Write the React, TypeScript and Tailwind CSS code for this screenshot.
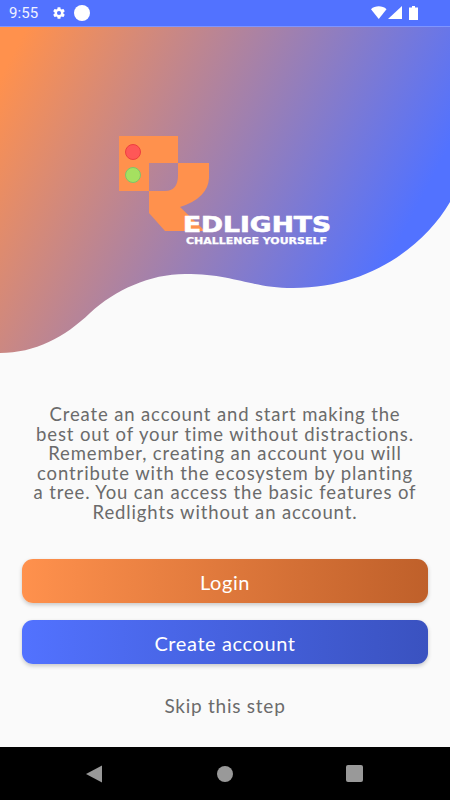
import React from "react";

function StatusBar() {
  return (
    <div className="h-[27px] shrink-0 bg-[#5272ff] border-b border-[#7f95ff] flex items-center pl-[9px] pr-[31px] text-white">
      <span className="text-[15px] leading-none font-['Roboto',sans-serif] tracking-[0.1px] text-[#f0f3ff]">9:55</span>
      <svg className="ml-[14px]" width="14" height="14" viewBox="0 0 24 24" fill="#fff">
        <path d="M19.4 13c.04-.33.06-.66.06-1s-.02-.67-.06-1l2.1-1.65c.2-.15.25-.42.13-.64l-2-3.46c-.12-.22-.38-.3-.6-.22l-2.5 1c-.52-.4-1.08-.73-1.7-.98l-.37-2.65A.5.5 0 0 0 14 2h-4a.5.5 0 0 0-.49.42l-.38 2.65c-.6.25-1.17.59-1.69.98l-2.49-1c-.23-.09-.49 0-.61.22l-2 3.46c-.13.22-.07.49.12.64L4.57 11c-.04.33-.07.67-.07 1s.03.67.07 1l-2.11 1.65c-.19.15-.25.42-.12.64l2 3.46c.12.22.38.3.61.22l2.49-1c.52.4 1.08.73 1.69.98l.38 2.65c.03.24.24.42.49.42h4c.25 0 .46-.18.49-.42l.37-2.65c.62-.25 1.18-.58 1.7-.98l2.5 1c.22.08.48 0 .6-.22l2-3.46c.12-.22.07-.49-.13-.64L19.4 13zM12 15.5A3.5 3.5 0 1 1 12 8.5a3.5 3.5 0 0 1 0 7z" />
      </svg>
      <span className="ml-[8px] w-4 h-4 rounded-full bg-white" />
      <svg className="ml-auto" width="48" height="16" viewBox="0 0 48 16" fill="#fff">
        <path d="M0 4.2 C4 0.4 11.5 0.4 15.500 4.200 L7.750 14 Z" />
        <path d="M17 14 L31 1 V14 Z" />
        <path d="M38 2.500 H41 V1 H44 V2.500 H47 V15 H38 Z" />
      </svg>
    </div>
  );
}

function Hero() {
  return (
    <svg className="block shrink-0" width="450" height="326" viewBox="0 27 450 326">
      <defs>
        <linearGradient id="wave" gradientUnits="userSpaceOnUse" x1="20" y1="40" x2="400" y2="240">
          <stop offset="0" stopColor="#ff914d" />
          <stop offset="1" stopColor="#5272ff" />
        </linearGradient>
      </defs>
      <path
        fill="url(#wave)"
        d="M0 27 H450 V202 C425 245 370 288 293 288 C250 288 235 274 185 274 C150 274 115 290 90 313 C65 337 35 353 0 353 Z"
      />
      <path fill="#ff914d" d="M119 136 H178 V163 H149 V191 H119 Z" />
      <path
        fill="#ff914d"
        d="M178 163 H209 V178 Q208 198 180 207 L205 231 H165 L149 213 V191 H165 Q178 191 178 175 Z"
      />
      <circle cx="133" cy="152" r="7.500" fill="#ff5757" stroke="#ee3f3f" strokeWidth="1" />
      <circle cx="133" cy="175" r="7.500" fill="#a5e060" stroke="#7ec46a" strokeWidth="1" />
      <text
        x="183"
        y="232"
        fontFamily="'DejaVu Sans', sans-serif"
        fontWeight="700"
        fontSize="20.500"
        fill="#fff"
        stroke="#fff"
        strokeWidth="0.6"
        textLength="148"
        lengthAdjust="spacingAndGlyphs"
      >
        EDLIGHTS
      </text>
      <text
        x="186"
        y="244"
        fontFamily="'DejaVu Sans', sans-serif"
        fontWeight="700"
        fontSize="8.300"
        fill="#fff"
        stroke="#fff"
        strokeWidth="0.25"
        textLength="141"
        lengthAdjust="spacingAndGlyphs"
      >
        CHALLENGE YOURSELF
      </text>
    </svg>
  );
}

function NavBar() {
  return (
    <div className="h-[53px] shrink-0 bg-black flex items-center justify-center pr-[2px]">
      <svg width="16" height="18" viewBox="0 0 16 18" fill="#999">
        <path d="M16 0.500 V17.500 L0 9 Z" />
      </svg>
      <span className="ml-[115px] w-4 h-4 rounded-full bg-[#999]" />
      <span className="ml-[113px] w-[17px] h-[17px] rounded-[2px] bg-[#999]" />
    </div>
  );
}

export default function App() {
  return (
    <div className="w-[450px] h-[800px] flex flex-col bg-[#fafafa] overflow-hidden font-['Lato',sans-serif]">
      <StatusBar />
      <Hero />
      <div className="flex-1 flex flex-col px-[22px]">
        <p className="mt-[52px] -mx-[20px] text-center text-[18.500px] leading-[19.600px] text-[#6b6b6b] tracking-[0.87px]">
          Create an account and start making the
          <br />
          best out of your time without distractions.
          <br />
          Remember, creating an account you will
          <br />
          contribute with the ecosystem by planting
          <br />
          a tree. You can access the basic features of
          <br />
          Redlights without an account.
        </p>
        <button className="mt-[36px] pt-[2px] h-[44px] rounded-[11px] bg-gradient-to-r from-[#ff914d] to-[#bf602a] text-white text-[20px] tracking-[0.6px] shadow-[0_2px_4px_rgba(0,0,0,0.2)]">
          Login
        </button>
        <button className="mt-[17px] pt-[2px] h-[44px] rounded-[11px] bg-gradient-to-r from-[#5272ff] to-[#3a52c0] text-white text-[20px] tracking-[0.6px] shadow-[0_2px_4px_rgba(0,0,0,0.2)]">
          Create account
        </button>
        <div className="mt-[30px] text-center text-[19px] leading-[24px] tracking-[0.75px] text-[#6b6b6b]">Skip this step</div>
      </div>
      <NavBar />
    </div>
  );
}
